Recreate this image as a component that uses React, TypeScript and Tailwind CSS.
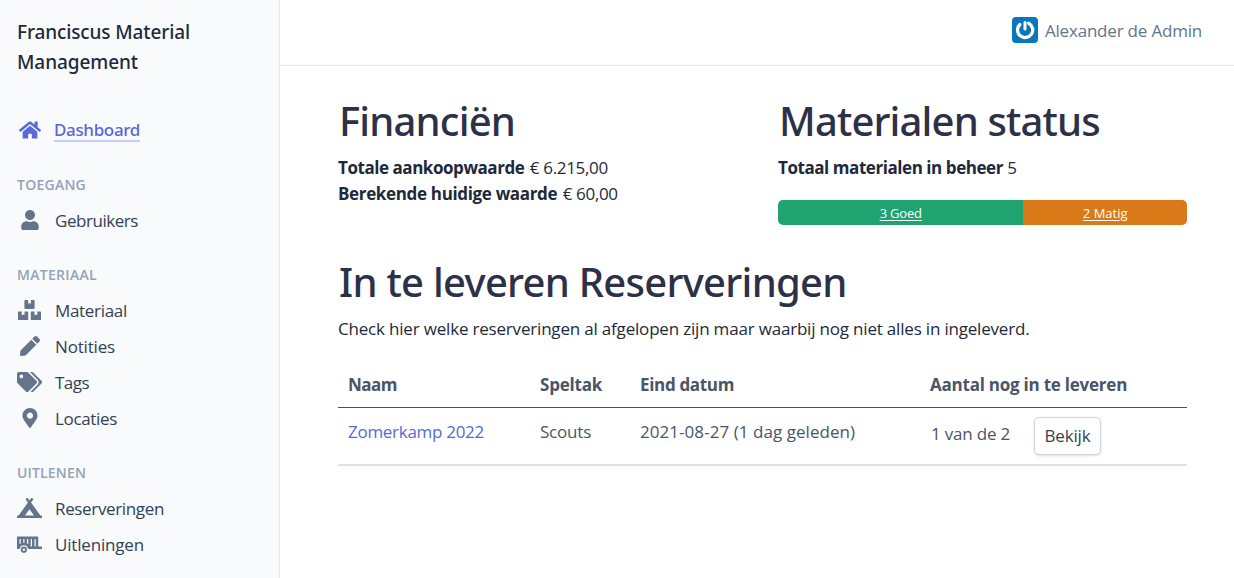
import type { ReactNode } from "react";
import { FaHome, FaUser, FaPen, FaTags, FaMapMarkerAlt, FaCampground, FaTrailer } from "react-icons/fa";

function Boxes() {
  return (
    <svg viewBox="0 0 23 20" className="h-5 w-[23px]" fill="currentColor">
      <path d="M7.400 0h2.700v3.800l1.400-.8 1.400.8V0h2.700c.6 0 1 .4 1 1v7.100c0 .5-.4.9-1 .9H7.400c-.6 0-1-.4-1-.9V1c0-.6.4-1 1-1z" />
      <path d="M1 11.500h2.700v3.700l1.400-.8 1.400.8v-3.700h2.700c.6 0 1 .4 1 1v7c0 .5-.4.900-1 .9H1c-.6 0-1-.4-1-.9v-7c0-.6.4-1 1-1z" />
      <path d="M13.800 11.500h2.700v3.700l1.400-.8 1.400.8v-3.700H22c.6 0 1 .4 1 1v7c0 .5-.4.900-1 .9h-8.200c-.6 0-1-.4-1-.9v-7c0-.6.4-1 1-1z" />
    </svg>
  );
}

function Avatar() {
  return (
    <svg viewBox="0 0 26 26" className="size-[26px]" fill="none" stroke="#fff" strokeLinecap="round">
      <rect width="26" height="26" rx="4" fill="#0a76bd" stroke="none" />
      <path d="M7.800 7.500A7.600 7.600 0 1 0 16.600 6.200" strokeWidth="3.300" />
      <path d="M13 5.500V12" strokeWidth="3" />
    </svg>
  );
}

function Item({ icon, label, tracking }: { icon: ReactNode; label: string; tracking: string }) {
  return (
    <li className="flex h-9 items-center gap-3">
      <span className="flex w-[25px] justify-center text-[#64748b]">{icon}</span>
      <span className={"pt-px pl-px text-[17px] text-[#334155] " + tracking}>{label}</span>
    </li>
  );
}

function Section({ title, tracking, children }: { title: string; tracking: string; children: ReactNode }) {
  return (
    <section className="pt-7">
      <h2 className={"mb-2 text-[14px] leading-[18px] font-semibold text-[#94a3b8] " + tracking}>{title}</h2>
      <ul>{children}</ul>
    </section>
  );
}

const heading = "pl-px font-['Noto_Sans'] text-[40px] leading-[48px] font-medium text-[#2d3148]";

export default function App() {
  return (
    <div className="flex h-[578px] overflow-hidden bg-white font-['Open_Sans',sans-serif] text-[17px] leading-[26px] text-[#1e293b]">
      <aside className="w-[280px] shrink-0 border-r border-[#e2e8f0] bg-[#f8fafc] pt-[17px] pl-[17px]">
        <div className="font-['Noto_Sans'] text-[19px] leading-[30px] font-medium text-[#1e293b]">
          <div className="tracking-[-0.12px]">Franciscus Material</div>
          <div className="tracking-[-0.09px]">Management</div>
        </div>
        <div className="mt-[35px] flex h-9 items-center gap-3 text-[#5a67d8]">
          <span className="flex w-[25px] justify-center"><FaHome size={22} /></span>
          <span className="border-b-2 border-[#c3cffd] font-['Noto_Sans'] text-[17px] leading-[21px] font-medium tracking-[-0.35px]">Dashboard</span>
        </div>
        <Section title="TOEGANG" tracking="tracking-[0.25px]">
          <Item icon={<FaUser size={20} />} label="Gebruikers" tracking="tracking-[-0.45px]" />
        </Section>
        <Section title="MATERIAAL" tracking="tracking-[0.31px]">
          <Item icon={<Boxes />} label="Materiaal" tracking="tracking-[-0.31px]" />
          <Item icon={<FaPen size={20} />} label="Notities" tracking="tracking-[-0.17px]" />
          <Item icon={<FaTags className="h-5 w-[25px]" />} label="Tags" tracking="tracking-[-0.5px]" />
          <Item icon={<FaMapMarkerAlt size={20} />} label="Locaties" tracking="tracking-[-0.34px]" />
        </Section>
        <Section title="UITLENEN" tracking="tracking-[0.16px]">
          <Item icon={<FaCampground className="h-5 w-[25px]" />} label="Reserveringen" tracking="tracking-[-0.35px]" />
          <Item icon={<FaTrailer className="h-5 w-[25px]" />} label="Uitleningen" tracking="tracking-[-0.18px]" />
        </Section>
      </aside>

      <div className="flex min-w-0 flex-1 flex-col">
        <header className="flex h-[66px] shrink-0 items-center justify-end gap-[7px] border-b border-[#e2e8f0] pr-8 pb-[5px]">
          <Avatar />
          <span className="pt-px tracking-[-0.2px] text-[#64748b]">Alexander de Admin</span>
        </header>

        <main className="pt-[31px] pr-[47px] pl-[58px]">
          <div className="grid grid-cols-[409px_409px] gap-[31px]">
            <section>
              <h1 className={heading + " tracking-[-0.82px]"}>Financiën</h1>
              <p className="mt-[10px]">
                <b className="tracking-[-0.45px]">Totale aankoopwaarde</b> <span className="pl-px tracking-[-0.33px]">€ 6.215,00</span>
              </p>
              <p>
                <b className="tracking-[-0.34px]">Berekende huidige waarde</b> <span className="pl-px tracking-[-0.33px]">€ 60,00</span>
              </p>
            </section>
            <section>
              <h1 className={heading + " tracking-[-0.84px]"}>Materialen status</h1>
              <p className="mt-[10px]"><b className="tracking-[-0.44px]">Totaal materialen in beheer</b> 5</p>
              <div className="mt-[19px] flex h-[25px] overflow-hidden rounded-[5px] text-center text-[13px] text-white">
                <a className="w-3/5 bg-[#1fa471] tracking-[-0.2px] underline underline-offset-2">3 Goed</a>
                <a className="w-2/5 bg-[#d97917] underline underline-offset-2">2 Matig</a>
              </div>
            </section>
          </div>

          <section className="mt-[33px]">
            <h1 className={heading + " tracking-[-0.72px]"}>In te leveren Reserveringen</h1>
            <p className="mt-[10px] tracking-[-0.19px]">
              Check hier welke reserveringen al afgelopen zijn maar waarbij nog niet alles in ingeleverd.
            </p>
            <table className="mt-[21px] w-[849px] table-fixed text-left text-[#4a5568]">
              <colgroup>
                <col className="w-[192px]" />
                <col className="w-[100px]" />
                <col className="w-[290px]" />
                <col />
              </colgroup>
              <thead>
                <tr className="h-11 border-b border-[#4a4e69]">
                  <th className="px-[10px] pt-px pb-0 tracking-[-0.5px]">Naam</th>
                  <th className="px-[10px] pt-px pb-0 tracking-[-0.22px]">Speltak</th>
                  <th className="px-[10px] pt-px pb-0 tracking-[-0.33px]">Eind datum</th>
                  <th className="px-[10px] pt-px pb-0 tracking-[-0.23px]">Aantal nog in te leveren</th>
                </tr>
              </thead>
              <tbody>
                <tr className="h-[58px] border-b-2 border-[#dee2e6] align-top">
                  <td className="px-[10px] pt-[11px] tracking-[-0.29px] text-[#5a67d8]">Zomerkamp 2022</td>
                  <td className="px-[10px] pt-[11px] tracking-[-0.21px]">Scouts</td>
                  <td className="px-[10px] pt-[11px] tracking-[0.05px] whitespace-nowrap">2021-08-27 (1 dag geleden)</td>
                  <td className="px-[10px] pt-[9px]">
                    <div className="flex gap-6">
                      <span className="pt-1 pl-px tracking-[-0.2px]">1 van de 2</span>
                      <button className="h-[38px] w-[67px] rounded-[5px] border border-[#cbd5e1] bg-white pt-px tracking-[-0.16px] text-[#334155] shadow-sm">
                        Bekijk
                      </button>
                    </div>
                  </td>
                </tr>
              </tbody>
            </table>
          </section>
        </main>
      </div>
    </div>
  );
}
